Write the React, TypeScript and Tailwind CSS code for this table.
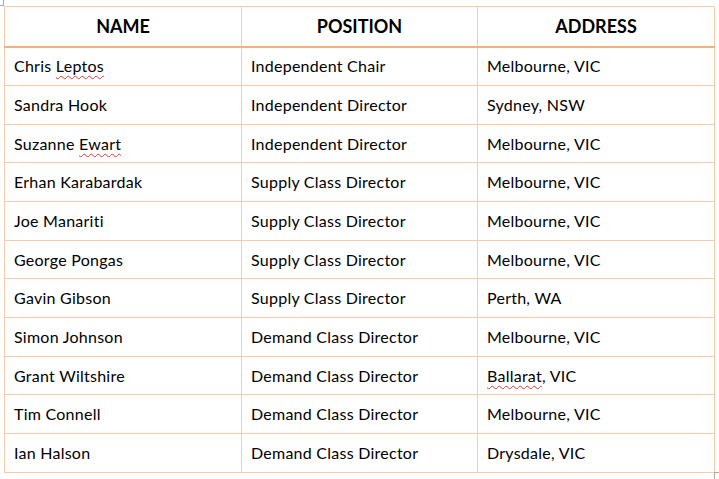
const rows: { name: string; position: string; address: string; flagName?: boolean; flagAddr?: boolean }[] = [
  { name: "Chris Leptos", position: "Independent Chair", address: "Melbourne, VIC", flagName: true },
  { name: "Sandra Hook", position: "Independent Director", address: "Sydney, NSW" },
  { name: "Suzanne Ewart", position: "Independent Director", address: "Melbourne, VIC", flagName: true },
  { name: "Erhan Karabardak", position: "Supply Class Director", address: "Melbourne, VIC" },
  { name: "Joe Manariti", position: "Supply Class Director", address: "Melbourne, VIC" },
  { name: "George Pongas", position: "Supply Class Director", address: "Melbourne, VIC" },
  { name: "Gavin Gibson", position: "Supply Class Director", address: "Perth, WA" },
  { name: "Simon Johnson", position: "Demand Class Director", address: "Melbourne, VIC" },
  { name: "Grant Wiltshire", position: "Demand Class Director", address: "Ballarat, VIC", flagAddr: true },
  { name: "Tim Connell", position: "Demand Class Director", address: "Melbourne, VIC" },
  { name: "Ian Halson", position: "Demand Class Director", address: "Drysdale, VIC" },
];

// word-style spell check squiggle under one word
function Flagged({ text, index }: { text: string; index: number }) {
  const parts = text.split(" ");
  return (
    <>
      {parts.map((p, i) => (
        <span key={i}>
          {i > 0 && " "}
          {i === index ? (
            <span className="underline decoration-wavy decoration-[#e53935] decoration-1 underline-offset-[3px]">
              {p.replace(",", "")}
            </span>
          ) : (
            p
          )}
          {i === index && p.endsWith(",") ? "," : ""}
        </span>
      ))}
    </>
  );
}

export default function App() {
  const cell = "border border-[#f8cbad] px-[9px] text-left align-middle";
  return (
    <div className="relative w-[719px] h-[479px] bg-white pl-1 pt-[6px] font-['Lato','Open_Sans',sans-serif] text-[16px] tracking-[0.25px] text-black">
      <span className="absolute left-0 top-[5px] w-[4px] h-px bg-[#a6a6a6]" />
      <span className="absolute left-[3px] top-0 w-px h-[6px] bg-[#a6a6a6]" />
      <span className="absolute left-[714px] top-[472px] w-[5px] h-px bg-[#a6a6a6]" />
      <span className="absolute left-[714px] top-[472px] w-px h-[7px] bg-[#a6a6a6]" />
      <table className="border-collapse w-[710px] table-fixed">
        <colgroup>
          <col className="w-[237px]" />
          <col className="w-[236px]" />
          <col className="w-[237px]" />
        </colgroup>
        <thead>
          <tr className="h-[40px]">
            {["NAME", "POSITION", "ADDRESS"].map((h) => (
              <th
                key={h}
                className="border border-[#f8cbad] border-b-2 border-b-[#f4b183] text-center font-bold text-[18px] tracking-normal pt-px"
              >
                {h}
              </th>
            ))}
          </tr>
        </thead>
        <tbody>
          {rows.map((r, i) => (
            <tr key={r.name} className={i % 3 === 2 ? "h-[38px]" : "h-[39px]"}>
              <td className={cell}>{r.flagName ? <Flagged text={r.name} index={1} /> : r.name}</td>
              <td className={cell}>{r.position}</td>
              <td className={cell}>{r.flagAddr ? <Flagged text={r.address} index={0} /> : r.address}</td>
            </tr>
          ))}
        </tbody>
      </table>
    </div>
  );
}
